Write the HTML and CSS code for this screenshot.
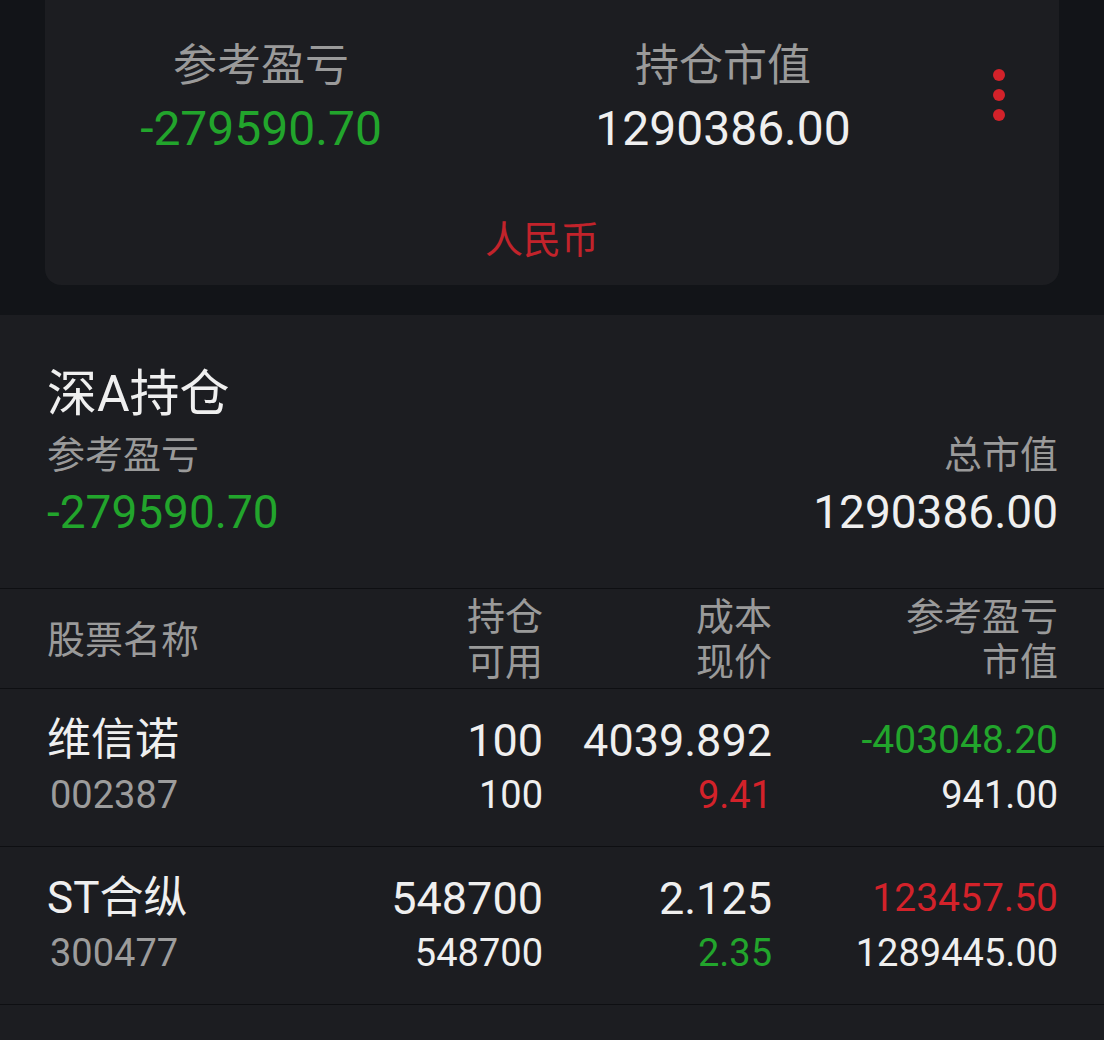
FILE: index.html
```html
<!DOCTYPE html>
<html lang="zh-CN">
<head>
<meta charset="UTF-8">
<meta name="viewport" content="width=device-width, initial-scale=1.0">
<title>持仓</title>
<link rel="stylesheet" href="styles.css">
</head>
<body>

<div class="account">
    <div class="card">
        <div class="summary">
            <div class="stat">
                <div class="stat-label">参考盈亏</div>
                <div class="stat-value down">-279590.70</div>
            </div>
            <div class="stat">
                <div class="stat-label">持仓市值</div>
                <div class="stat-value">1290386.00</div>
            </div>
            <div class="more">
                <span></span><span></span><span></span>
            </div>
        </div>
        <div class="currency">人民币</div>
    </div>
</div>

<div class="holdings">
    <div class="holdings-head">
        <h2 class="title">深A持仓</h2>
        <div class="totals">
            <div class="total">
                <div class="total-label">参考盈亏</div>
                <div class="total-value down">-279590.70</div>
            </div>
            <div class="total right">
                <div class="total-label">总市值</div>
                <div class="total-value">1290386.00</div>
            </div>
        </div>
    </div>

    <div class="row header">
        <div>股票名称</div>
        <div class="num">持仓<br>可用</div>
        <div class="num">成本<br>现价</div>
        <div class="num">参考盈亏<br>市值</div>
    </div>

    <div class="row item">
        <div>
            <div class="name">维信诺</div>
            <div class="code">002387</div>
        </div>
        <div class="num">
            <div class="top">100</div>
            <div class="bottom">100</div>
        </div>
        <div class="num">
            <div class="top">4039.892</div>
            <div class="bottom up">9.41</div>
        </div>
        <div class="num">
            <div class="top small down">-403048.20</div>
            <div class="bottom">941.00</div>
        </div>
    </div>

    <div class="row item">
        <div>
            <div class="name">ST合纵</div>
            <div class="code">300477</div>
        </div>
        <div class="num">
            <div class="top">548700</div>
            <div class="bottom">548700</div>
        </div>
        <div class="num">
            <div class="top">2.125</div>
            <div class="bottom down">2.35</div>
        </div>
        <div class="num">
            <div class="top small up">123457.50</div>
            <div class="bottom">1289445.00</div>
        </div>
    </div>
</div>

</body>
</html>
```

FILE: styles.css
```css
body {
    margin: 0;
    padding: 0;
    background-color: #1c1d21;
    color: #efefef;
    font-family: Roboto, "Noto Sans CJK SC", sans-serif;
}

.down {
    color: #22a52c !important;
}
.up {
    color: #d3222a !important;
}

/* account card */
.account {
    background-color: #121418;
    padding: 0 45px 30px;
}
.card {
    background-color: #1c1d21;
    border-radius: 0 0 16px 16px;
    padding: 38px 0 21px;
}
.summary {
    display: grid;
    grid-template-columns: 432px 492px 1fr;
}
.stat {
    text-align: center;
}
.stat-label {
    font-size: 44px;
    line-height: 56px;
    color: #9a9a9a;
}
.stat-value {
    font-size: 48px;
    line-height: 56px;
    margin-top: 7px;
}
.more {
    display: flex;
    flex-direction: column;
    gap: 8px;
    margin: 31px 0 0 24px;
}
.more span {
    width: 12px;
    height: 12px;
    border-radius: 50%;
    background-color: #d3222a;
}
.currency {
    margin-top: 59px;
    padding-right: 20px;
    text-align: center;
    font-size: 38px;
    line-height: 48px;
    color: #c2232b;
}

/* holdings */
.holdings-head {
    padding: 49px 46px 49px 47px;
}
.title {
    margin: 0;
    font-size: 50px;
    line-height: 60px;
    font-weight: 400;
}
.totals {
    display: flex;
    justify-content: space-between;
    margin-top: 7px;
}
.total.right {
    text-align: right;
}
.total-label {
    font-size: 38px;
    line-height: 48px;
    color: #9a9a9a;
}
.total-value {
    font-size: 46px;
    line-height: 54px;
    margin-top: 6px;
}

.row {
    display: grid;
    grid-template-columns: 266px 230px 229px 286px;
    padding: 0 46px 0 47px;
    border-bottom: 1px solid #0e0f12;
}
.row .num {
    text-align: right;
}
.row.header {
    box-sizing: border-box;
    height: 101px;
    padding-top: 3px;
    border-top: 1px solid #0e0f12;
    align-items: center;
    font-size: 38px;
    line-height: 45px;
    color: #9a9a9a;
}
.row.item {
    padding-top: 24px;
    padding-bottom: 23px;
    line-height: 55px;
}
.name {
    font-size: 44px;
}
.code {
    font-size: 38px;
    color: #9c9c9c;
    padding-left: 3px;
}
.top {
    font-size: 45px;
}
.top.small {
    font-size: 39px;
}
.bottom {
    font-size: 38px;
}
```
